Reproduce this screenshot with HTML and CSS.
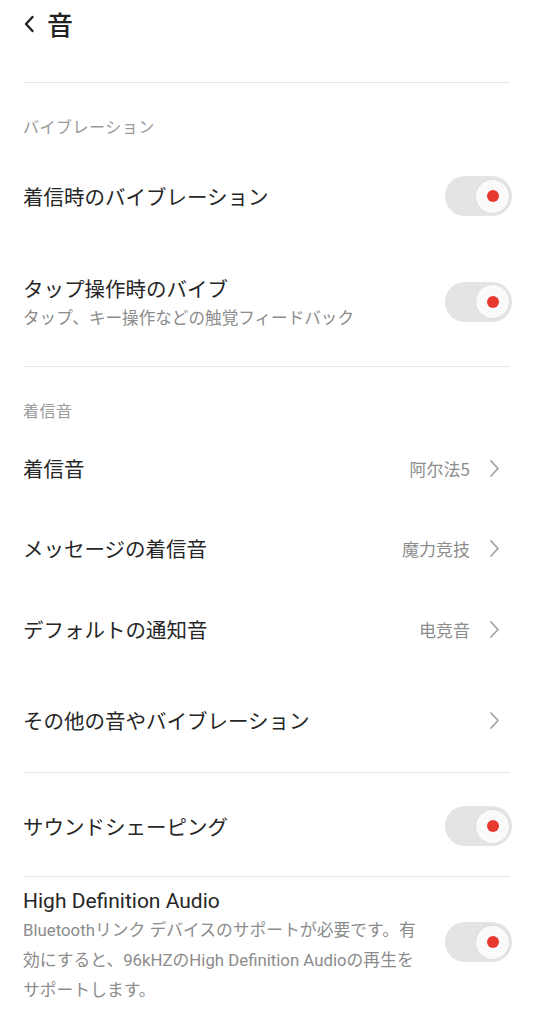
FILE: index.html
```html
<!DOCTYPE html>
<html lang="ja">
<head>
<meta charset="utf-8">
<link rel="stylesheet" href="styles.css">
</head>
<body>
<div class="page">
  <header class="topbar">
    <svg class="back" width="12" height="20" viewBox="0 0 12 20"><path d="M9.5 3 L3 10 L9.5 17" fill="none" stroke="#222" stroke-width="2.4" stroke-linecap="round" stroke-linejoin="round"/></svg>
    <h1 class="title">音</h1>
  </header>
  <div class="divider first"></div>

  <div class="section-title sec1">バイブレーション</div>
  <div class="row r-vib">
    <div class="text"><div class="label">着信時のバイブレーション</div></div>
    <div class="toggle"><div class="knob"><div class="dot"></div></div></div>
  </div>
  <div class="row r-tap">
    <div class="text">
      <div class="label">タップ操作時のバイブ</div>
      <div class="sub">タップ、キー操作などの触覚フィードバック</div>
    </div>
    <div class="toggle"><div class="knob"><div class="dot"></div></div></div>
  </div>
  <div class="divider d2"></div>

  <div class="section-title sec2">着信音</div>
  <div class="row nav r-ring">
    <div class="label">着信音</div>
    <div class="value"><span lang="zh-CN">阿尔法5</span><svg class="chev" width="12" height="19" viewBox="0 0 12 19"><path d="M2 2 L9 9.5 L2 17" fill="none" stroke="#a3a3a3" stroke-width="1.8" stroke-linecap="round" stroke-linejoin="round"/></svg></div>
  </div>
  <div class="row nav r-msg">
    <div class="label">メッセージの着信音</div>
    <div class="value"><span lang="zh-CN">魔力竞技</span><svg class="chev" width="12" height="19" viewBox="0 0 12 19"><path d="M2 2 L9 9.5 L2 17" fill="none" stroke="#a3a3a3" stroke-width="1.8" stroke-linecap="round" stroke-linejoin="round"/></svg></div>
  </div>
  <div class="row nav r-def">
    <div class="label">デフォルトの通知音</div>
    <div class="value"><span lang="zh-CN">电竞音</span><svg class="chev" width="12" height="19" viewBox="0 0 12 19"><path d="M2 2 L9 9.5 L2 17" fill="none" stroke="#a3a3a3" stroke-width="1.8" stroke-linecap="round" stroke-linejoin="round"/></svg></div>
  </div>
  <div class="row nav r-other">
    <div class="label">その他の音やバイブレーション</div>
    <div class="value"><svg class="chev" width="12" height="19" viewBox="0 0 12 19"><path d="M2 2 L9 9.5 L2 17" fill="none" stroke="#a3a3a3" stroke-width="1.8" stroke-linecap="round" stroke-linejoin="round"/></svg></div>
  </div>
  <div class="divider d3"></div>

  <div class="row r-shape">
    <div class="text"><div class="label">サウンドシェーピング</div></div>
    <div class="toggle"><div class="knob"><div class="dot"></div></div></div>
  </div>
  <div class="divider d4"></div>

  <div class="row r-hd">
    <div class="text">
      <div class="label en">High Definition Audio</div>
      <div class="desc">Bluetoothリンク デバイスのサポートが必要です。有効にすると、96kHZのHigh Definition Audioの再生をサポートします。</div>
    </div>
    <div class="toggle"><div class="knob"><div class="dot"></div></div></div>
  </div>
</div>
</body>
</html>
```

FILE: styles.css
```css
* { box-sizing: border-box; margin: 0; padding: 0; }
html, body { background: #fff; }
body {
  font-family: "Noto Sans CJK JP", "Noto Sans", sans-serif;
  color: #222;
  width: 535px;
  height: 1024px;
  overflow: hidden;
}
.page { padding: 0 23px 0 23px; }

.topbar {
  display: flex;
  align-items: center;
  height: 48px;
  gap: 12px;
}
.title { font-size: 26px; font-weight: 500; line-height: 1; }

.divider { height: 1px; background: #e6e6e6; margin-right: 2px; }
.divider.first { margin-top: 34px; }

.section-title {
  font-size: 16px;
  letter-spacing: 0.5px;
  color: #9a9a9a;
  line-height: 20px;
}
.sec1 { margin-top: 33px; }
.sec2 { margin-top: 33px; }

.row {
  display: flex;
  align-items: center;
  justify-content: space-between;
}
.label { font-size: 20.5px; line-height: 28px; color: #262626; }
.label.en { font-family: "Roboto", "Noto Sans CJK JP", sans-serif; font-size: 21px; }
.sub { font-size: 16.6px; line-height: 24px; color: #8c8c8c; margin-top: 3px; }
.desc {
  font-family: "Roboto", "Noto Sans CJK JP", sans-serif;
  font-size: 16.8px;
  line-height: 30px;
  color: #8c8c8c;
  width: 400px;
}

.r-vib { margin-top: 37px; height: 46px; }
.r-tap { margin-top: 55px; }
.d2 { margin-top: 37px; }
.r-ring { margin-top: 28px; height: 40px; }
.r-msg { margin-top: 40px; height: 40px; }
.r-def { margin-top: 41px; height: 40px; }
.r-other { margin-top: 51px; height: 40px; }
.d3 { margin-top: 32px; }
.r-shape { margin-top: 30px; height: 46px; }
.d4 { margin-top: 27px; }
.r-hd { margin-top: 10px; }

.value {
  display: flex;
  align-items: center;
  gap: 19px;
  font-size: 17px;
  color: #8c8c8c;
  margin-right: 11px;
}
.value span { font-family: "Noto Sans CJK SC", "Noto Sans CJK JP", sans-serif; }

.toggle {
  width: 67px;
  height: 40px;
  border-radius: 20px;
  background: #e4e4e7;
  display: flex;
  align-items: center;
  justify-content: flex-end;
  padding-right: 3px;
  flex-shrink: 0;
}
.knob {
  width: 33px;
  height: 33px;
  border-radius: 50%;
  background: #fafafa;
  box-shadow: 0 0 3px rgba(0,0,0,0.06);
  display: flex;
  align-items: center;
  justify-content: center;
}
.dot {
  width: 12px;
  height: 12px;
  border-radius: 50%;
  background: #e8392f;
}
.r-hd .toggle { margin-bottom: 8px; }
```
